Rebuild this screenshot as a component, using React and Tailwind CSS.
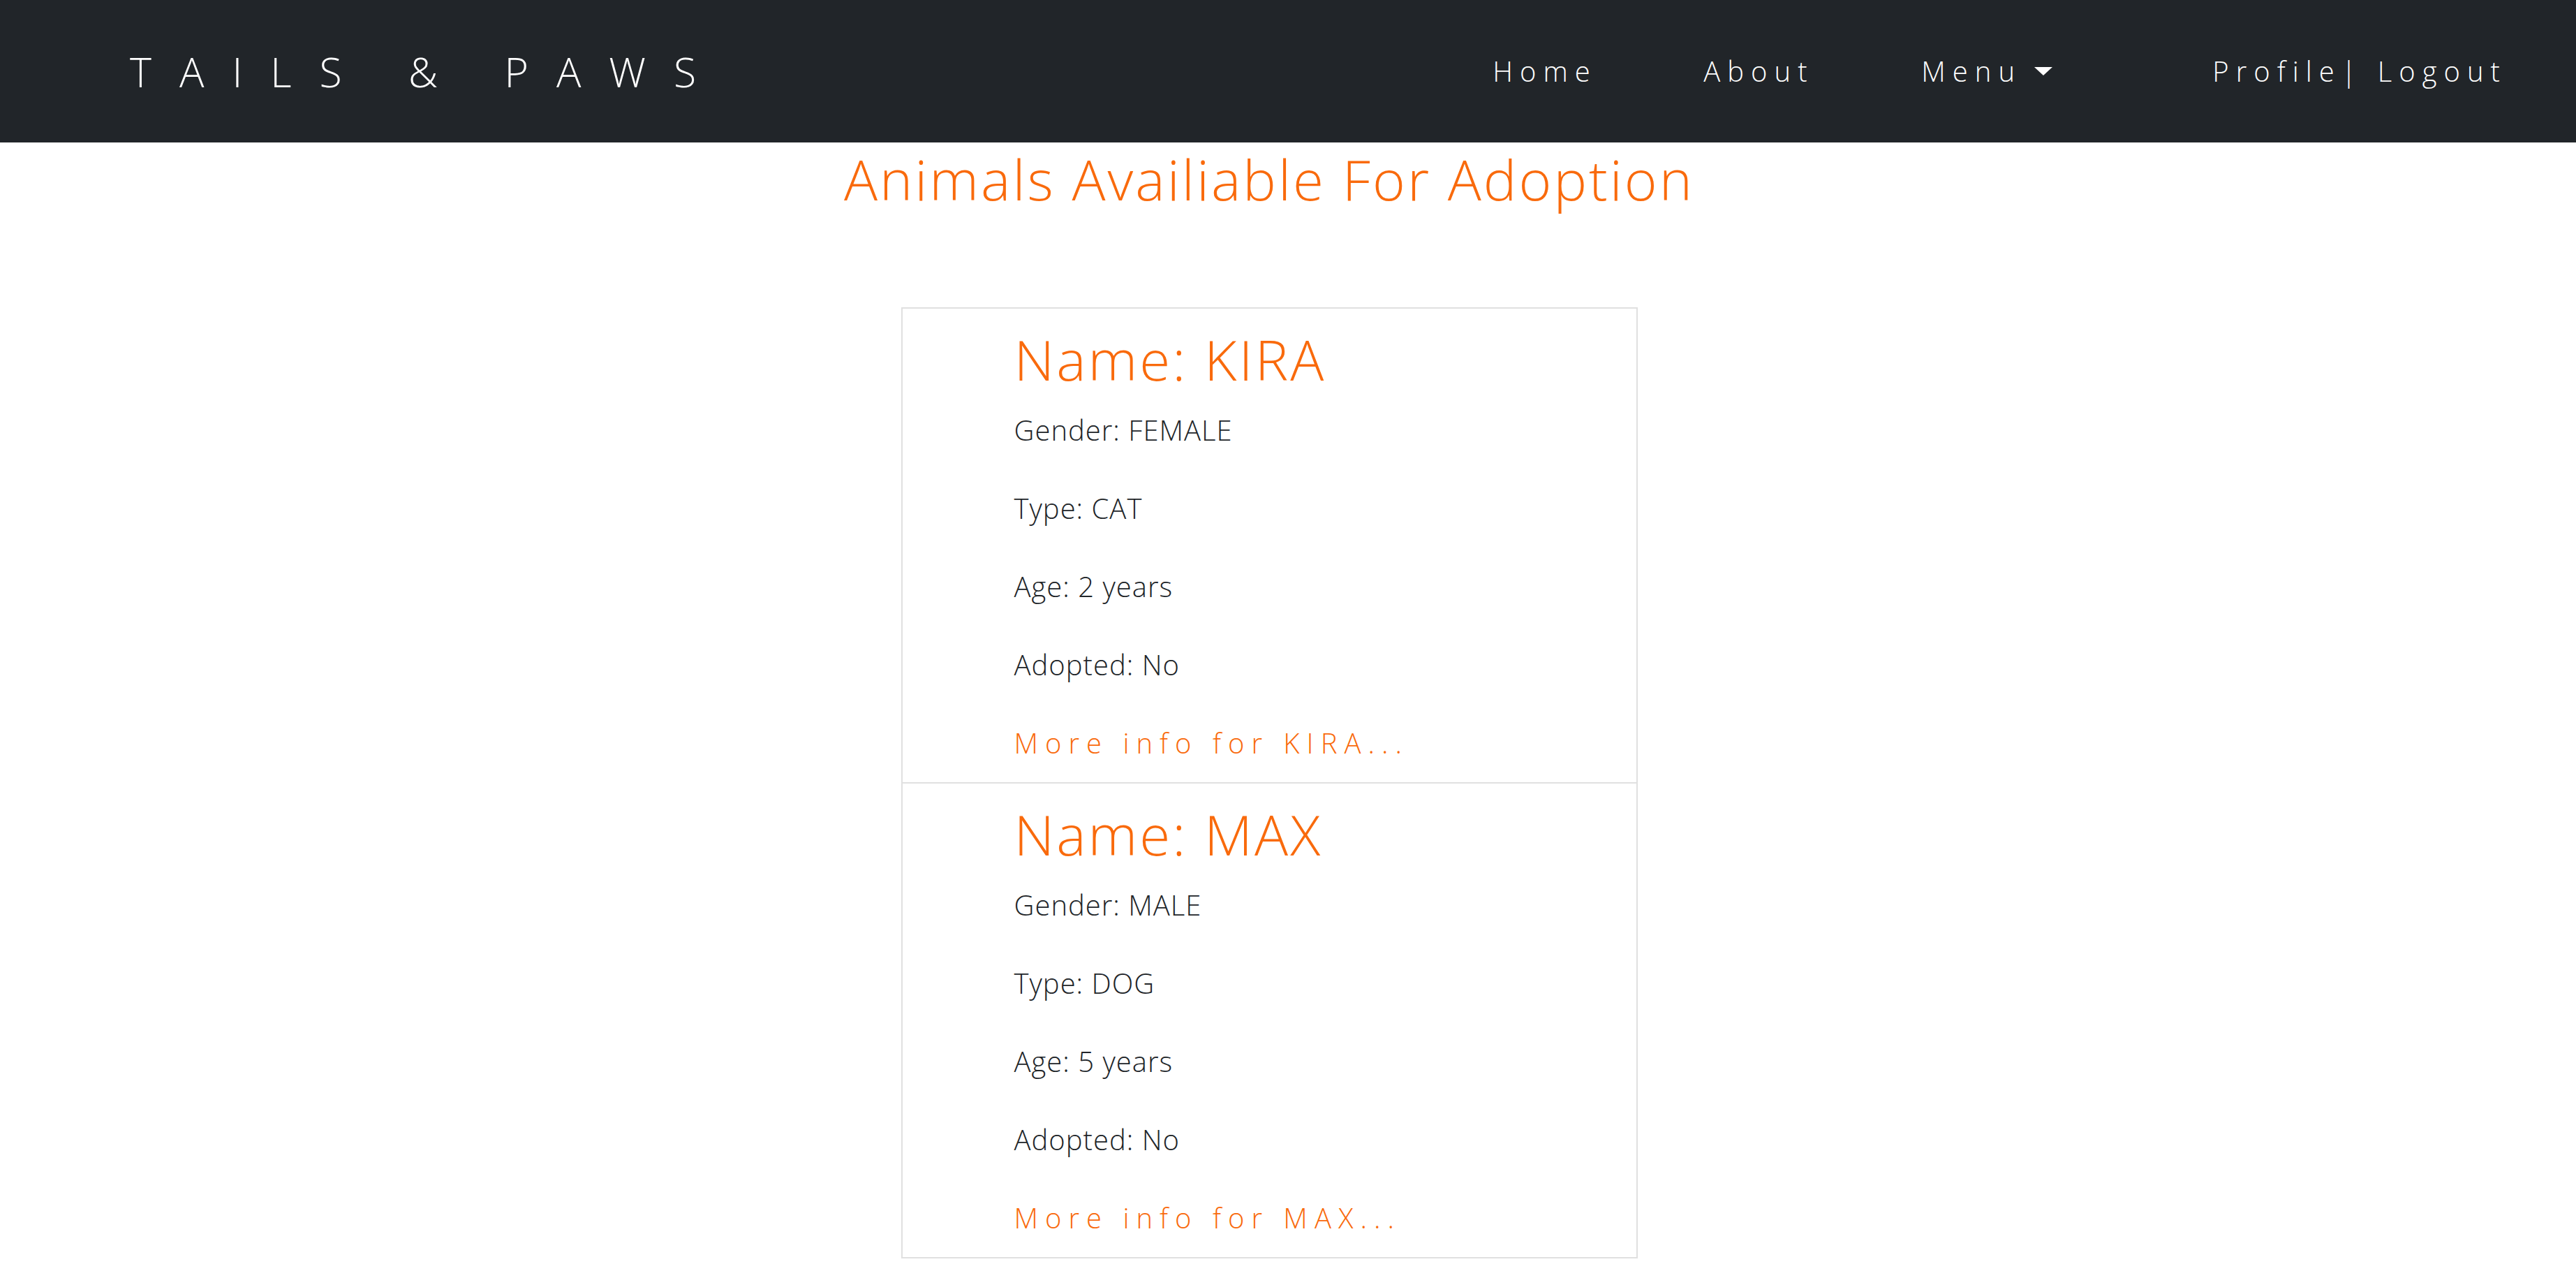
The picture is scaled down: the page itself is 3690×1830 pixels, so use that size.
const ANIMALS = [
  { name: "KIRA", gender: "FEMALE", type: "CAT", age: "2 years", adopted: "No" },
  { name: "MAX", gender: "MALE", type: "DOG", age: "5 years", adopted: "No" },
];

const font = { fontFamily: '"Open Sans", "Noto Sans", sans-serif' };

export default function App() {
  return (
    <div className="min-h-screen bg-white font-light text-[#212529]" style={font}>
      <nav className="flex h-[204px] items-center bg-[#212529] pl-[186px] text-white">
        <a href="#" className="text-[59px] leading-none tracking-[40px] text-white">
          TAILS &amp; PAWS
        </a>
        <ul className="ml-auto flex items-center text-[40px] leading-none tracking-[10px]">
          <li className="w-[306px] pl-[4px]">
            <a href="#">Home</a>
          </li>
          <li className="w-[312px]">
            <a href="#">About</a>
          </li>
          <li className="w-[417px]">
            <a href="#" className="inline-flex items-center">
              Menu
              <span className="ml-[18px] h-0 w-0 border-x-[13px] border-t-[12px] border-x-transparent border-t-white" />
            </a>
          </li>
          <li className="mr-[99px]">
            <a href="#">Profile|</a> <a href="#">Logout</a>
          </li>
        </ul>
      </nav>

      <main className="pr-[54px]">
        <h2 className="mt-[4px] text-center text-[80px] leading-[96px] tracking-[3px] text-[#f96a0c]">
          Animals Availiable For Adoption
        </h2>

        <ul className="mx-auto mt-[136px] w-[1055px] border-2 border-[#e0e0e0]">
          {ANIMALS.map((animal, i) => (
            <AnimalItem key={animal.name} animal={animal} first={i === 0} />
          ))}
        </ul>
      </main>
    </div>
  );
}

function AnimalItem({ animal, first }) {
  return (
    <li className={`pl-[160px] pt-[24px] pb-[20px] ${first ? "" : "border-t-2 border-[#e0e0e0]"}`}>
      <h3 className="mb-[18px] text-[80px] leading-[96px] tracking-[3px] text-[#f96a0c]">
        Name: {animal.name}
      </h3>
      <p className="mb-[40px] text-[40px] leading-[72px] tracking-[1px]">Gender: {animal.gender}</p>
      <p className="mb-[40px] text-[40px] leading-[72px] tracking-[1px]">Type: {animal.type}</p>
      <p className="mb-[40px] text-[40px] leading-[72px] tracking-[1px]">Age: {animal.age}</p>
      <p className="mb-[40px] text-[40px] leading-[72px] tracking-[1px]">Adopted: {animal.adopted}</p>
      <a href="#" className="block text-[40px] leading-[72px] tracking-[10px] text-[#f96a0c]">
        More info for {animal.name}...
      </a>
    </li>
  );
}
